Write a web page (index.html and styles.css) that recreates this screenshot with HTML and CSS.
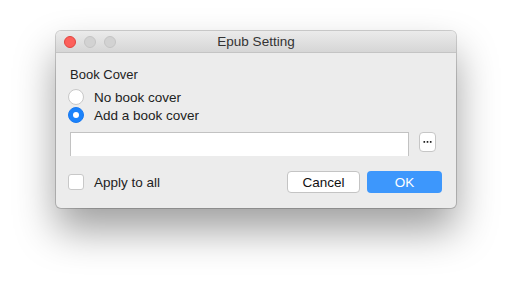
FILE: index.html
```html
<!DOCTYPE html>
<html lang="en">
<head>
    <meta charset="UTF-8">
    <title>Epub Setting</title>
    <link rel="stylesheet" href="styles.css">
</head>
<body>
    <div class="window">
        <div class="titlebar">
            <div class="lights">
                <span class="light light-close"></span>
                <span class="light"></span>
                <span class="light"></span>
            </div>
            <div class="title">Epub Setting</div>
        </div>
        <div class="content">
            <div class="section-label">Book Cover</div>
            <div class="radios">
                <div class="radio-row">
                    <span class="radio"></span>
                    <span class="radio-label">No book cover</span>
                </div>
                <div class="radio-row">
                    <span class="radio radio-on"></span>
                    <span class="radio-label">Add a book cover</span>
                </div>
            </div>
            <div class="file-row">
                <div class="file-field"></div>
                <div class="browse-btn">
                    <svg width="9" height="2" viewBox="0 0 9 2">
                        <rect x="0.5" y="0" width="1.6" height="1.8" fill="#222"/>
                        <rect x="3.7" y="0" width="1.6" height="1.8" fill="#222"/>
                        <rect x="6.9" y="0" width="1.6" height="1.8" fill="#222"/>
                    </svg>
                </div>
            </div>
            <div class="footer">
                <div class="check-row">
                    <span class="checkbox"></span>
                    <span class="check-label">Apply to all</span>
                </div>
                <div class="buttons">
                    <div class="btn btn-cancel">Cancel</div>
                    <div class="btn btn-ok">OK</div>
                </div>
            </div>
        </div>
    </div>
</body>
</html>
```

FILE: styles.css
```css
* {
    margin: 0;
    padding: 0;
    box-sizing: border-box;
}

body {
    background: #fff;
    width: 512px;
    height: 288px;
    padding: 31px 0 0 56px;
    font-family: 'Liberation Sans', Arial, sans-serif;
    font-size: 13.5px;
    color: #222;
    overflow: hidden;
}

.window {
    width: 400px;
    height: 177px;
    background: #ececec;
    border-radius: 5px;
    box-shadow: 0 0 0 1px rgba(0, 0, 0, 0.18),
        0 22px 40px rgba(0, 0, 0, 0.38);
    overflow: hidden;
}

.titlebar {
    height: 22px;
    position: relative;
    display: flex;
    align-items: center;
    justify-content: center;
    background: linear-gradient(#ebebeb, #d6d6d6);
    border-bottom: 1px solid #c4c4c4;
}

.lights {
    position: absolute;
    left: 8px;
    top: 5px;
    display: flex;
    gap: 8px;
}

.light {
    width: 12px;
    height: 12px;
    border-radius: 50%;
    background: #d2d2d2;
    border: 1px solid #c4c4c4;
}

.light-close {
    background: #fc605b;
    border-color: #e0443e;
}

.title {
    font-size: 13.5px;
    color: #333;
}

.content {
    padding: 14px 14px 14px 12px;
}

.section-label {
    padding-left: 2px;
    line-height: 16px;
    font-size: 13px;
}

.radios {
    margin-top: 5px;
    display: flex;
    flex-direction: column;
}

.radio-row {
    height: 18px;
    display: flex;
    align-items: center;
    gap: 10px;
}

.radio {
    width: 16px;
    height: 16px;
    border-radius: 50%;
    background: #fff;
    border: 1px solid #c8c8c8;
    display: flex;
    align-items: center;
    justify-content: center;
}

.radio-on {
    background: #1a82fb;
    border-color: #1a7af0;
}

.radio-on::after {
    content: '';
    width: 6px;
    height: 6px;
    border-radius: 50%;
    background: #fff;
}

.file-row {
    margin-top: 8px;
    padding-left: 2px;
    display: flex;
    align-items: flex-start;
    gap: 10px;
}

.file-field {
    width: 339px;
    height: 24px;
    background: #fff;
    border: 1px solid #c2c2c2;
    border-bottom: none;
}

.browse-btn {
    width: 17px;
    height: 20px;
    background: #fff;
    border: 1px solid #c6c6c6;
    border-radius: 4px;
    display: flex;
    align-items: center;
    justify-content: center;
}

.footer {
    margin-top: 15px;
    display: flex;
    justify-content: space-between;
    align-items: center;
}

.check-row {
    display: flex;
    align-items: center;
    gap: 10px;
}

.checkbox {
    width: 16px;
    height: 16px;
    background: #fff;
    border: 1px solid #c8c8c8;
    border-radius: 3px;
}

.buttons {
    display: flex;
    gap: 7px;
}

.btn {
    height: 22px;
    border-radius: 4px;
    display: flex;
    align-items: center;
    justify-content: center;
}

.btn-cancel {
    width: 73px;
    background: #fff;
    border: 1px solid #c4c4c4;
    color: #111;
}

.btn-ok {
    width: 75px;
    background: #3d97fc;
    color: #fff;
}
```
